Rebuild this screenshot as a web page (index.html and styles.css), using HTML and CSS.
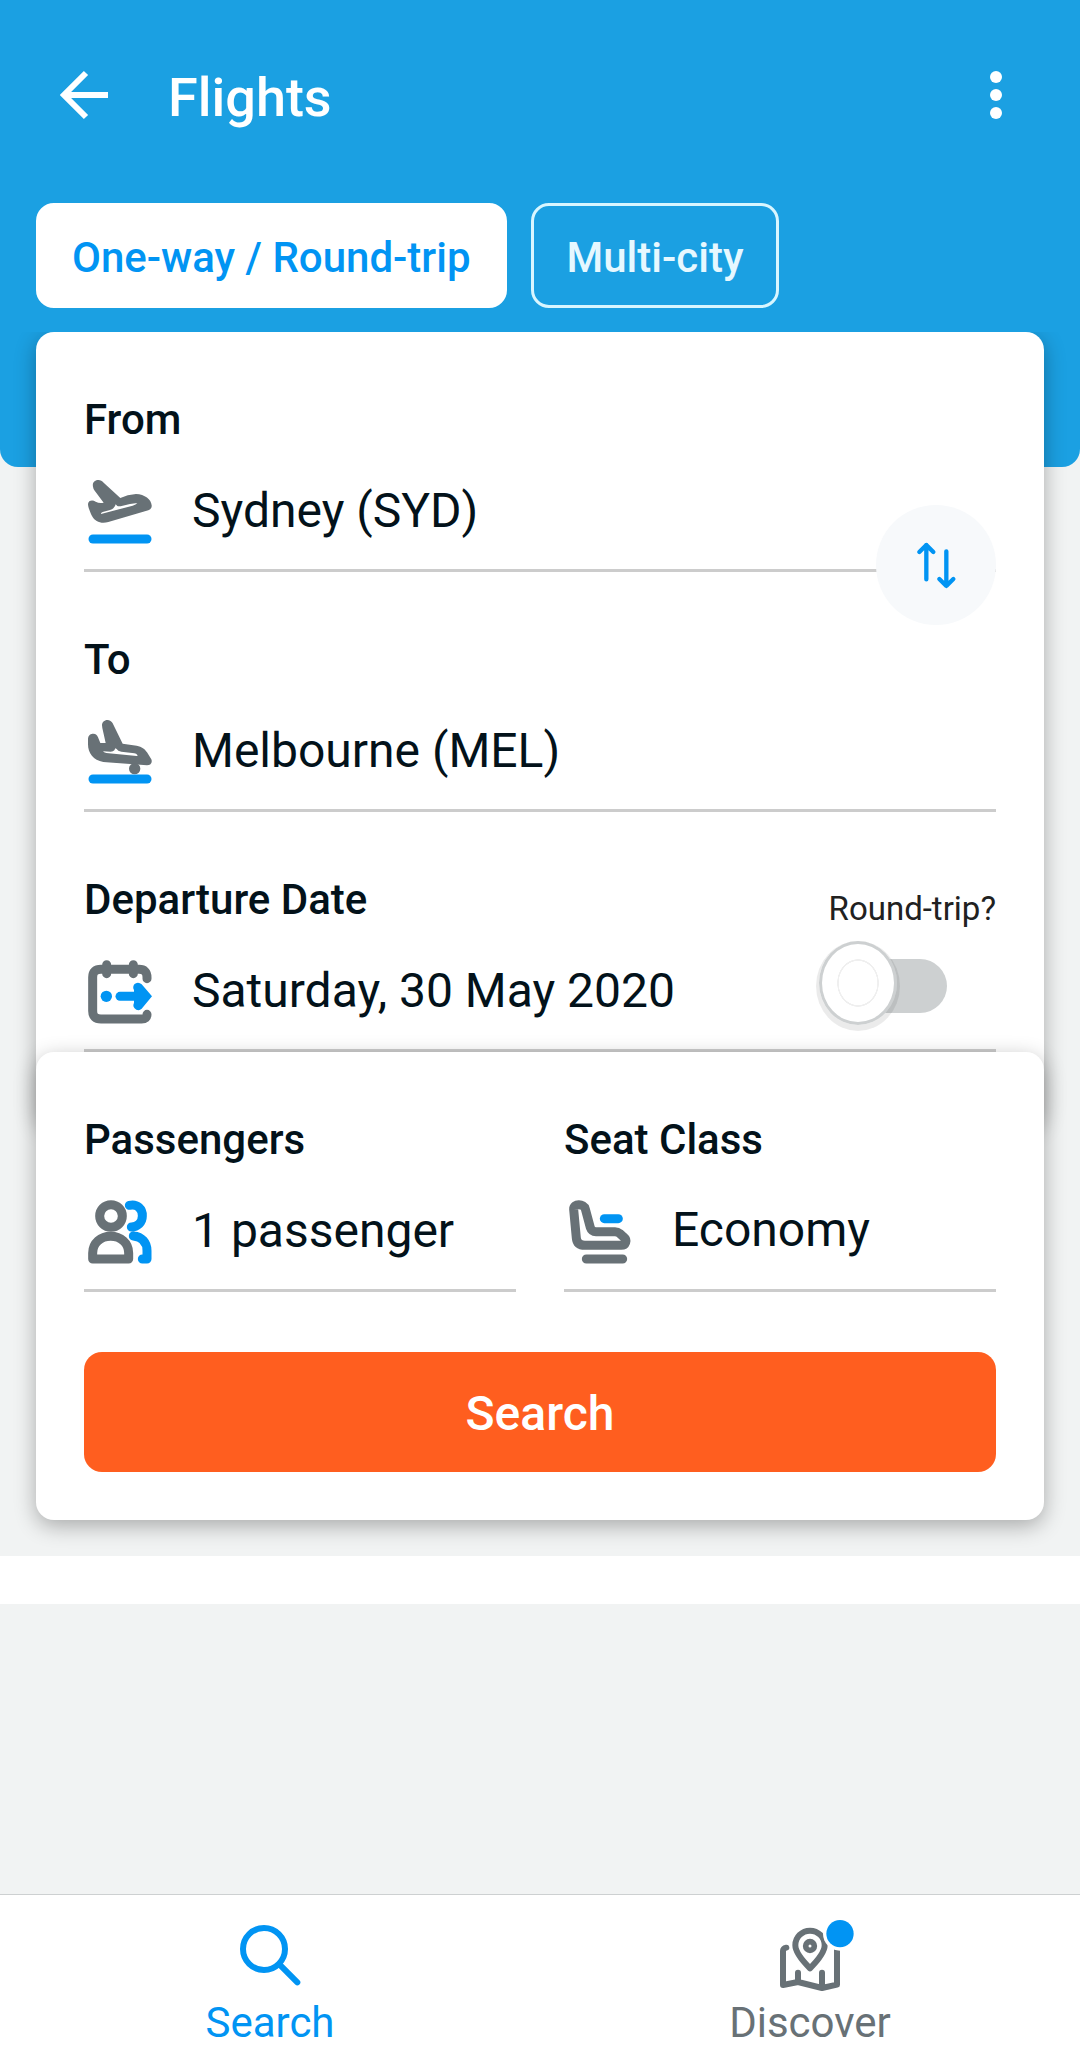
FILE: index.html
```html
<!DOCTYPE html>
<html lang="en">
<head>
<meta charset="utf-8">
<meta name="viewport" content="width=device-width, initial-scale=1">
<title>Flights</title>
<link rel="stylesheet" href="styles.css">
</head>
<body>
<header class="header">
  <div class="appbar">
    <button class="icon-button" type="button" aria-label="Back">
      <svg class="icon-back" viewBox="0 0 48 48"><path d="M48 24H5M26 2L4 24l22 22"/></svg>
    </button>
    <h1 class="title">Flights</h1>
    <button class="icon-button menu-button" type="button" aria-label="More options">
      <svg class="icon-more" viewBox="0 0 12 48"><circle cx="6" cy="6" r="6"/><circle cx="6" cy="24" r="6"/><circle cx="6" cy="42" r="6"/></svg>
    </button>
  </div>
  <div class="tabs">
    <button class="tab tab-active" type="button">One-way / Round-trip</button>
    <button class="tab" type="button">Multi-city</button>
  </div>
</header>

<main class="main">
  <form class="form">
    <section class="card route-card">
      <div class="field">
        <label class="label" for="from">From</label>
        <div class="control">
          <svg class="icon" viewBox="42 48 216 216">
            <path class="grey-fill" fill-rule="evenodd" d="M69 80C66 66 76 60 85 60C92 60 96 63 101 68L151 114Q172 104 198 102C224 103 244 118 245 136C246 144 242 148 235 151L115 186C95 192 75 186 66 168C59 154 54 140 54 132C55 121 68 119 77 125Q88 131 101 128L73 91Q70 86 69 80ZM93 162L188 137Q198 134 202 129Q180 131 158 137Q147 140 142 138L137 133Q136 139 130 145Q127 148 120 150L98 156Q92 158 93 162Z"/>
            <path class="blue-line thick" d="M69 237H231"/>
          </svg>
          <input class="value" id="from" type="text" value="Sydney (SYD)">
        </div>
        <button class="swap" type="button" aria-label="Swap origin and destination">
          <svg class="icon-swap" viewBox="155 153 144 144"><path d="M198 268V165M177 186L198 165L219 186M258 184V287M237 267L258 288L279 267"/></svg>
        </button>
      </div>
      <div class="field">
        <label class="label" for="to">To</label>
        <div class="control">
          <svg class="icon" viewBox="42 48 216 216">
            <path class="grey-fill" d="M96 76C96 67 103 60 112 60C119 60 125 64 128 70L158 131L200 137C216 140 224 147 231 157L244 178C248 188 242 196 231 196L100 186C70 181 54 160 54 133V116C55 104 63 101 70 101C78 101 81 105 84 112L91 129H107L97 84Z"/>
            <path class="gap-fill" d="M99 154Q101 158 109 159L200 168Q205 168 202 165Q199 161 193 160L154 155Q143 153 140 147L136 145L133 151Q130 155 122 155Z"/>
            <circle class="grey-fill" cx="194" cy="206" r="17"/>
            <path class="blue-line thick" d="M69 237H231"/>
          </svg>
          <input class="value" id="to" type="text" value="Melbourne (MEL)">
        </div>
      </div>
      <div class="field date-field">
        <div class="field-main">
          <label class="label" for="date">Departure Date</label>
          <div class="control">
            <svg class="icon" viewBox="42 48 216 216">
              <path class="grey-line thick" d="M231 116V112Q231 88 207 88H93Q68 88 68 112V213Q68 237 93 237H215Q231 237 231 223M110 74V101M190 74V101"/>
              <circle class="blue-fill" cx="109" cy="169" r="17"/>
              <path class="blue-line thick" d="M150 169H215"/>
              <path class="blue-fill" d="M192 150C186 139 193 128 204 128Q210 128 215 133L246 169L215 206Q208 213 199 209Q186 201 192 188Z"/>
            </svg>
            <input class="value" id="date" type="text" value="Saturday, 30 May 2020">
          </div>
        </div>
        <div class="round-trip">
          <label class="round-trip-label" for="round-trip">Round-trip?</label>
          <input class="switch" id="round-trip" type="checkbox" role="switch">
        </div>
      </div>
    </section>

    <section class="card details-card">
      <div class="columns">
        <div class="field">
          <label class="label" for="passengers">Passengers</label>
          <div class="control">
            <svg class="icon" viewBox="42 48 216 216">
              <circle class="grey-line thick" cx="123" cy="108" r="34"/>
              <path class="grey-line thick" d="M68 237V219C68 189 92 169 122 169S176 189 176 219V237Z"/>
              <path class="blue-line thick" d="M178 76C202 70 218 88 217 108C217 128 202 141 184 141M190 168C216 170 231 188 231 212V237H217"/>
            </svg>
            <input class="value" id="passengers" type="text" value="1 passenger">
          </div>
        </div>
        <div class="field">
          <label class="label" for="seat">Seat Class</label>
          <div class="control">
            <svg class="icon" viewBox="42 48 216 216">
              <path class="grey-line thick" d="M71 88C70 69 102 71 106 87L121 143Q125 155 138 155H195Q203 155 209 160L222 172C233 181 227 196 214 196H105Q81 196 79 174ZM109 237H218"/>
              <path class="blue-line thick" d="M163 116H205"/>
            </svg>
            <select class="value" id="seat"><option>Economy</option><option>Business</option></select>
          </div>
        </div>
      </div>
      <button class="submit" type="submit">Search</button>
    </section>
  </form>
  <div class="band"></div>
</main>

<nav class="nav">
  <a class="nav-item nav-active" href="#search">
    <svg class="icon" viewBox="162 117 216 216"><circle class="lens" cx="252" cy="207" r="63"/><path class="handle" d="M299 254L352 307"/></svg>
    <span>Search</span>
  </a>
  <a class="nav-item" href="#discover">
    <svg class="icon" viewBox="222 117 216 216">
      <path class="map" d="M259 203Q249 205 249 213V315L294 306L366 324L411 314V211M294 278V306M366 278V320"/>
      <path class="map" d="M330 265C310 245 286 218 286 196A44 44 0 0 1 374 196C374 218 350 245 330 265Z"/>
      <circle class="map pin-core" cx="330" cy="198" r="13"/>
      <circle class="badge-ring" cx="420" cy="161" r="51"/>
      <circle class="blue-fill" cx="420" cy="161" r="41"/>
    </svg>
    <span>Discover</span>
  </a>
</nav>
</body>
</html>
```
FILE: styles.css
```css
:root {
  --sky: #1ba0e2;
  --blue: #0194f3;
  --grey: #687176;
  --ink: #03121a;
  --line: #cccccc;
  --orange: #ff5e1f;
}

*,
*::before,
*::after {
  box-sizing: border-box;
}

body {
  display: flex;
  flex-direction: column;
  min-height: 100vh;
  margin: 0;
  background: #f1f3f3;
  color: var(--ink);
  font-family: Roboto, sans-serif;
  font-size: 42px;
  line-height: 48px;
}

button,
input,
select {
  margin: 0;
  padding: 0;
  border: 0;
  background: none;
  color: inherit;
  font: inherit;
}

svg {
  display: block;
  flex: none;
  overflow: visible;
}

/* Header */
.header {
  padding: 35px 36px 159px;
  border-radius: 0 0 18px 18px;
  background: var(--sky);
  color: #fff;
}

.appbar {
  display: flex;
  align-items: center;
  height: 120px;
  padding: 0 24px;
}

.icon-button {
  display: flex;
}

.menu-button {
  margin-left: auto;
  padding: 0 18px;
}

.icon-back {
  width: 48px;
  height: 48px;
  fill: none;
  stroke: #fff;
  stroke-width: 6;
}

.icon-more {
  width: 12px;
  height: 48px;
  fill: #fff;
}

.title {
  margin: 6px 0 0 60px;
  font-size: 54px;
  font-weight: 500;
  line-height: 64px;
}

.tabs {
  display: flex;
  gap: 24px;
  margin-top: 48px;
}

.tab {
  height: 105px;
  padding: 4px 33px 0;
  border: 3px solid #d8f6ff;
  border-radius: 18px;
  color: #e6f8ff;
  font-weight: 500;
}

.tab-active {
  border-color: #fff;
  background: #fff;
  color: var(--blue);
}

/* Search form */
.main {
  flex: 1;
  margin-top: -135px;
  overflow: hidden;
}

.form {
  padding: 0 36px 36px;
}

.card {
  position: relative;
  padding: 0 48px 48px;
  border-radius: 18px;
  background: #fff;
  box-shadow: 0 6px 21px rgba(0, 0, 0, 0.3);
}

.route-card {
  padding-bottom: 72px;
}

.details-card {
  margin-top: -72px;
}

.field {
  position: relative;
  min-width: 0;
  padding: 64px 0 21px;
  border-bottom: 3px solid var(--line);
}

.label {
  display: block;
  margin-bottom: 32px;
  font-weight: 500;
}

.control {
  display: flex;
  align-items: center;
  gap: 36px;
}

.value {
  flex: 1;
  min-width: 0;
  height: 72px;
  padding-bottom: 4px;
  font-size: 48px;
  line-height: 68px;
  appearance: none;
}

.icon {
  width: 72px;
  height: 72px;
}

.thick {
  stroke-width: 27;
}

.grey-fill {
  fill: var(--grey);
}

.blue-fill {
  fill: var(--blue);
}

.gap-fill {
  fill: #fff;
}

.grey-line,
.blue-line {
  fill: none;
  stroke: var(--grey);
  stroke-linecap: round;
  stroke-linejoin: round;
}

.blue-line {
  stroke: var(--blue);
}

.swap {
  position: absolute;
  right: 0;
  bottom: -56px;
  z-index: 1;
  display: flex;
  align-items: center;
  justify-content: center;
  width: 120px;
  height: 120px;
  border-radius: 50%;
  background: #f7f9fb;
}

.icon-swap {
  width: 48px;
  height: 48px;
  fill: none;
  stroke: var(--blue);
  stroke-width: 13;
  stroke-linecap: round;
  stroke-linejoin: round;
}

.date-field {
  display: flex;
}

.field-main {
  flex: 1;
  min-width: 0;
}

.round-trip {
  display: flex;
  flex-direction: column;
  gap: 12px;
  margin-top: 13px;
  color: #212121;
}

.round-trip-label {
  padding-left: 10px;
  font-size: 33px;
  line-height: 40px;
}

.switch {
  position: relative;
  width: 128px;
  height: 84px;
  margin-bottom: -12px;
  appearance: none;
}

.switch::before {
  content: "";
  position: absolute;
  inset: 18px 0 12px 24px;
  border-radius: 27px;
  background: #cdd0d1;
}

.switch::after {
  content: "";
  position: absolute;
  top: 0;
  left: 0;
  width: 78px;
  height: 84px;
  border: 3px solid #cdd0d1;
  border-radius: 50%;
  background: radial-gradient(21px 24px, #fff 91%, #efefef 93%, #efefef 98%, #fff 100%);
  box-shadow: 0 3px 0 3px rgba(0, 0, 0, 0.08);
}

.columns {
  display: grid;
  grid-template-columns: 1fr 1fr;
  gap: 48px;
}

.submit {
  width: 100%;
  height: 120px;
  margin-top: 60px;
  padding-top: 4px;
  border-radius: 18px;
  background: var(--orange);
  color: #fff;
  font-size: 48px;
  font-weight: 500;
}

.band {
  height: 48px;
  background: #fff;
}

/* Bottom navigation */
.nav {
  display: grid;
  grid-template-columns: 1fr 1fr;
  border-top: 1px solid #cdd0d1;
  background: #fff;
}

.nav-item {
  display: flex;
  flex-direction: column;
  align-items: center;
  gap: 8px;
  padding: 24px 0 5px;
  color: var(--grey);
  text-decoration: none;
}

.nav-active {
  color: var(--blue);
}

.lens,
.handle,
.map {
  fill: none;
  stroke: currentColor;
  stroke-width: 18;
  stroke-linecap: round;
  stroke-linejoin: round;
}

.pin-core {
  stroke-width: 17;
}

.badge-ring {
  fill: #fff;
}
```
